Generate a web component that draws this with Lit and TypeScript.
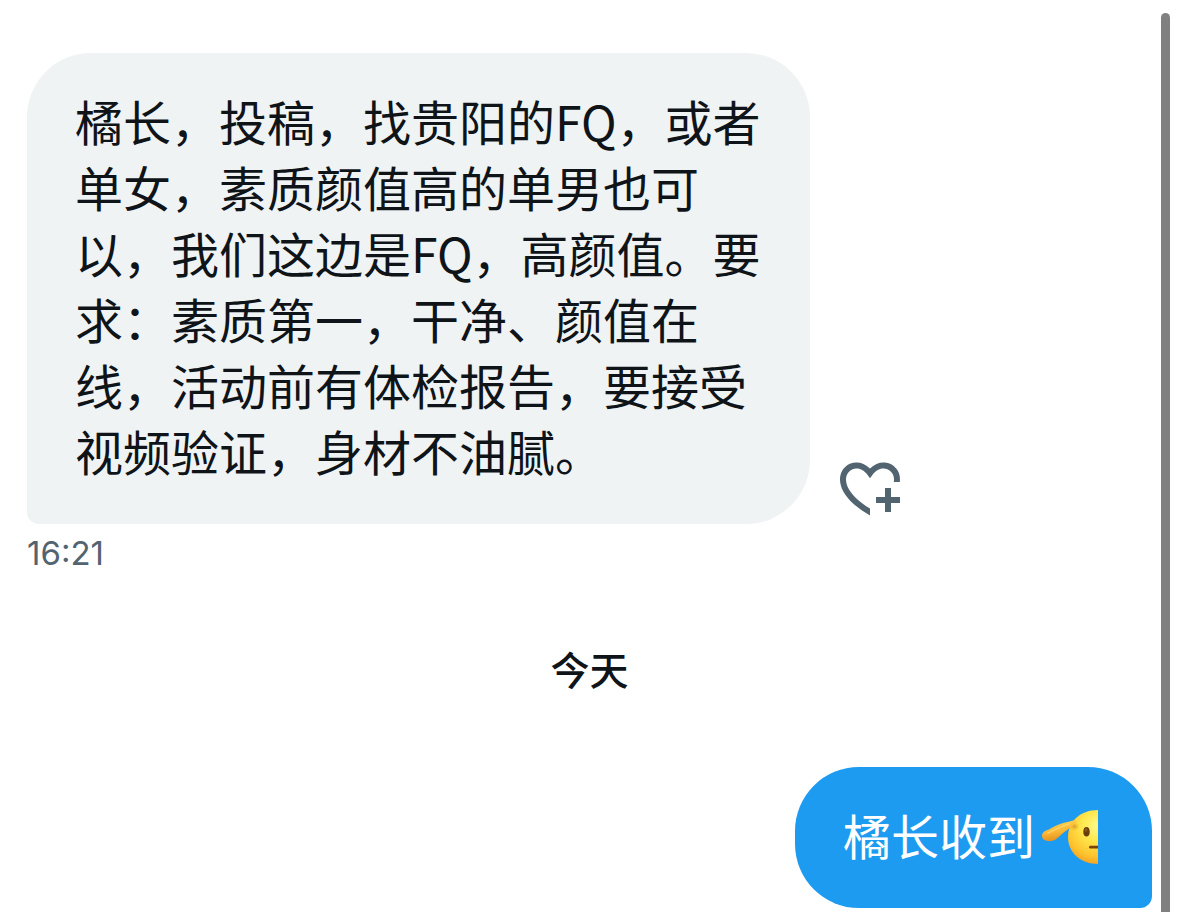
import { LitElement, html, css } from "lit";
import { customElement, property } from "lit/decorators.js";

@customElement("salute-emoji")
class SaluteEmoji extends LitElement {
  static styles = css`
    :host {
      display: inline-block;
      vertical-align: top;
      margin: 8px 6px 0;
      line-height: 0;
    }
    svg {
      display: block;
      width: 57px;
      height: 56px;
    }
  `;

  render() {
    return html`<svg viewBox="0 0 57 56" role="img" aria-label="敬礼">
      <defs>
        <radialGradient id="face" gradientUnits="userSpaceOnUse" cx="56" cy="17" r="42">
          <stop offset="0" stop-color="#fff98a" />
          <stop offset="0.35" stop-color="#ffe84d" />
          <stop offset="0.72" stop-color="#fdc42e" />
          <stop offset="1" stop-color="#f0961d" />
        </radialGradient>
        <linearGradient id="hand" x1="0.4" y1="0" x2="0.6" y2="1">
          <stop offset="0" stop-color="#fdd050" />
          <stop offset="0.55" stop-color="#fab535" />
          <stop offset="1" stop-color="#e08a1c" />
        </linearGradient>
        <radialGradient id="shade">
          <stop offset="0" stop-color="#c27a1c" stop-opacity="0.6" />
          <stop offset="1" stop-color="#e09a20" stop-opacity="0" />
        </radialGradient>
      </defs>
      <path d="M57 1C40 1 27 12 27 28s13 27 30 27z" fill="url(#face)" />
      <ellipse cx="33.500" cy="17.500" rx="5" ry="4.500" fill="url(#shade)" />
      <path
        d="M34.600 13.600C36 12.600 35.600 11 34 11.200C32 11.200 30 12.200 27.500 12.800C22 13.600 14 16.500 8 20.500C3.500 21.700 0.800 24 1 27C1 30.500 5 32.800 10.500 32C15.500 31.200 18 27.500 21.500 24.500C25 21.800 27.500 20 30.500 17.800C32 16.500 33.300 14.800 34.600 13.600Z"
        fill="url(#hand)"
      />
      <path d="M7 24C14 20.500 20 17.500 28 15" fill="none" stroke="#ffdf7a" stroke-width="1.800" stroke-linecap="round" opacity="0.6" />
      <ellipse cx="45.500" cy="22.700" rx="3.200" ry="4.700" fill="#6b3d0a" />
      <ellipse cx="45" cy="21" rx="1.400" ry="1.700" fill="#8d5b17" />
      <path d="M57 36.800h-7.600a1.400 1.400 0 0 0 0 2.800H57z" fill="#7a4208" />
    </svg>`;
  }
}

@customElement("message-bubble")
class MessageBubble extends LitElement {
  @property({ type: Boolean, reflect: true }) own = false;

  static styles = css`
    :host {
      display: block;
      max-width: 783px;
      box-sizing: border-box;
      padding: 34px 48px 41px;
      border-radius: 64px 64px 64px 12px;
      background: #eff3f4;
      color: #0f1419;
      font-size: 48px;
      line-height: 66px;
    }
    :host([own]) {
      border-radius: 64px 64px 12px 64px;
      background: #1d9bf0;
      color: #fff;
    }
    .text {
      margin: 0;
    }
  `;

  render() {
    return html`<p class="text"><slot></slot></p>`;
  }
}

@customElement("app-root")
class AppRoot extends LitElement {
  static styles = css`
    :host {
      display: flex;
      min-height: 100vh;
      background: #fff;
      color: #0f1419;
      font-family: "Noto Sans CJK SC", sans-serif;
    }
    .thread {
      flex: 1;
      min-width: 0;
      padding: 53px 9px 4px 27px;
    }
    .row {
      display: flex;
      align-items: flex-end;
      gap: 24px;
    }
    .row.own {
      justify-content: flex-end;
    }
    .react {
      flex: none;
      padding: 0;
      border: 0;
      background: none;
      color: #536471;
      cursor: pointer;
    }
    .react svg {
      display: block;
      width: 72px;
      height: 72px;
      fill: currentColor;
    }
    .time {
      display: block;
      margin-top: 11px;
      color: #536471;
      font-family: Inter, sans-serif;
      font-size: 33px;
      line-height: 36px;
    }
    .day {
      margin: 73px 0 75px;
      font-size: 39px;
      font-weight: 500;
      line-height: 48px;
      text-align: center;
    }
    .rail {
      flex: none;
      width: 9px;
      margin: 13px 8px 0 0;
      border-radius: 5px 5px 0 0;
      background: #808080;
    }
  `;

  render() {
    return html`
      <main class="thread">
        <div class="row">
          <message-bubble>橘长，投稿，找贵阳的FQ，或者单女，素质颜值高的单男也可以，我们这边是FQ，高颜值。要求：素质第一，干净、颜值在线，活动前有体检报告，要接受视频验证，身材不油腻。</message-bubble>
          <button class="react" type="button" aria-label="添加回应">
            <svg viewBox="0 0 24 24" aria-hidden="true">
              <path
                d="M17 12v3h-2.998v2h3v3h2v-3h3v-2h-3v-3h-2zm-5 6.839c-3.871-2.340-6.053-4.639-7.127-6.609-1.112-2.040-1.031-3.700-.479-4.820.561-1.130 1.667-1.840 2.910-1.910 1.222-.060 2.680.510 3.892 2.160l.806 1.090.805-1.090c1.211-1.650 2.668-2.220 3.890-2.160 1.242.070 2.347.780 2.908 1.910.334.677.490 1.554.321 2.590h2.011c.153-1.283-.039-2.469-.539-3.480-.887-1.790-2.647-2.910-4.601-3.010-1.650-.090-3.367.560-4.796 2.010-1.430-1.450-3.147-2.100-4.798-2.010-1.954.100-3.714 1.220-4.601 3.010-.896 1.810-.846 4.170.514 6.670 1.353 2.480 4.003 5.120 8.382 7.670l.502.299v-2.320z"
              />
            </svg>
          </button>
        </div>
        <time class="time">16:21</time>
        <h2 class="day">今天</h2>
        <div class="row own">
          <message-bubble own>橘长收到<salute-emoji></salute-emoji></message-bubble>
        </div>
      </main>
      <div class="rail"></div>
    `;
  }
}
